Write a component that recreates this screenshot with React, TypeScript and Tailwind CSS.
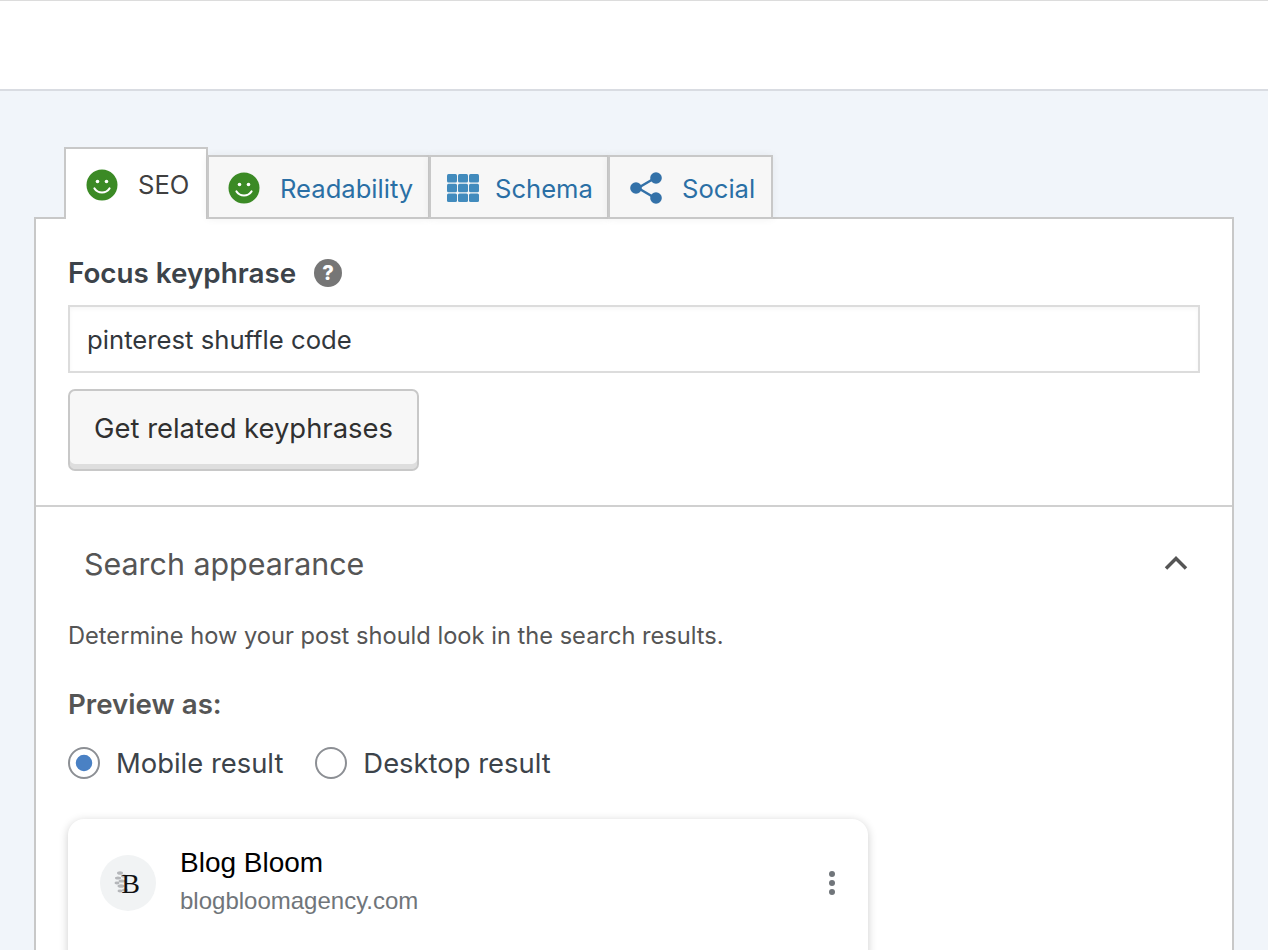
import { Circle } from "lucide-react";

const font = "font-['Inter','Liberation_Sans',sans-serif]";

function Smiley() {
  return (
    <svg viewBox="0 0 32 32" className="h-8 w-8 shrink-0">
      <circle cx="16" cy="16" r="15.5" fill="#3b8a25" />
      <circle cx="11.5" cy="12.5" r="1.8" fill="#fff" />
      <circle cx="20.5" cy="12.5" r="1.8" fill="#fff" />
      <path d="M8.5 19.5c2 3 4.500 4 7.500 4s5.500-1 7.500-4" fill="none" stroke="#fff" strokeWidth="2.200" strokeLinecap="round" />
    </svg>
  );
}

function GridIcon() {
  return (
    <svg viewBox="0 0 32 28" className="h-7 w-8 shrink-0" fill="#428bbd">
      {[0, 1, 2].map((r) =>
        [0, 1, 2].map((c) => <rect key={`${r}-${c}`} x={c * 11} y={r * 9.700} width="10" height="8.600" rx="1.500" />)
      )}
    </svg>
  );
}

function ShareIcon() {
  return (
    <svg viewBox="0 0 32 32" className="h-8 w-8 shrink-0">
      <path d="M8 16 25 6M8 16l17 10" stroke="#3371a8" strokeWidth="2.600" fill="none" />
      <circle cx="6" cy="16" r="5.800" fill="#3371a8" />
      <circle cx="26" cy="6" r="5.800" fill="#3371a8" />
      <circle cx="26" cy="26" r="5.800" fill="#3371a8" />
    </svg>
  );
}

function Tab({ icon, label, className }: { icon: React.ReactNode; label: string; className: string }) {
  return (
    <div className={`-ml-px flex h-[64px] items-center border-2 border-[#c8c8c8] bg-[#f7f7f7] pt-[1px] shadow-[0_0_8px_rgba(0,0,0,0.06)] ${className}`}>
      {icon}
      <span className="mt-[2px] text-[25.6px] leading-none text-[#2a6fa5]">{label}</span>
    </div>
  );
}

export default function App() {
  return (
    <div className={`${font} h-[950px] w-[1268px] overflow-hidden bg-[#f1f5fa]`}>
      <div className="h-[91px] border-b-2 border-t border-b-[#d9dce2] border-t-[#dcdcdc] bg-white" />

      <div className="ml-[34px] mr-[34px] pt-[56px]">
        {/* tabs */}
        <div className="relative z-10 -mb-[2px] flex items-end pl-[30px]">
          <div className="flex h-[72px] w-[144px] items-center gap-[20px] border-2 border-b-0 border-[#c8c8c8] bg-white pl-[20px] pt-[2px]">
            <Smiley />
            <span className="text-[25.6px] leading-none text-[#404040]">SEO</span>
          </div>
          <Tab icon={<Smiley />} label="Readability" className="w-[223px] gap-[20px] pl-[19px]" />
          <Tab icon={<GridIcon />} label="Schema" className="w-[180px] gap-[16px] pl-[16px]" />
          <Tab icon={<ShareIcon />} label="Social" className="w-[165px] gap-[20px] pl-[20px]" />
        </div>

        <div className="h-[800px] border-2 border-[#c8c8c8] bg-white">
          <div className="border-b-2 border-[#d0d0d0] px-[32px] pb-[34px] pt-[36px]">
            <div className="flex items-center gap-[18px]">
              <span className="text-[27.8px] font-semibold leading-[36px] text-[#3c434a]">Focus keyphrase</span>
              <span className="flex h-7 w-7 items-center justify-center rounded-full bg-[#767676] text-[20px] font-extrabold leading-none text-white">?</span>
            </div>
            <div className="mt-[14px] flex h-[68px] items-center border-2 border-[#dcdcdc] pl-[17px] pt-[2px] text-[25.7px] text-[#32373c] shadow-[inset_0_2px_4px_rgba(0,0,0,0.04)]">
              pinterest shuffle code
            </div>
            <button className="mt-[16px] block h-[82px] w-[351px] rounded-[7px] border-2 border-[#c8c8c8] bg-[#f7f7f7] pb-[3px] text-center text-[27.4px] text-[#303030] shadow-[inset_0_-5px_0_#dedede]">
              Get related keyphrases
            </button>
          </div>

          <div className="px-[32px]">
            <div className="flex items-center justify-between pl-[16px] pr-[12px] pt-[37px]">
              <span className="text-[30.4px] leading-[40px] text-[#555]">Search appearance</span>
              <svg viewBox="0 0 24 14" className="-mt-[2px] h-[14px] w-6" fill="none" stroke="#555" strokeWidth="3.500">
                <path d="M2 12.500 12 2.500l10 10" />
              </svg>
            </div>
            <p className="mt-[36px] text-[23.65px] leading-[32px] text-[#555]">
              Determine how your post should look in the search results.
            </p>
            <div className="mt-[34px] text-[27.7px] font-semibold leading-[36px] text-[#555]">Preview as:</div>
            <div className="mt-[25px] flex h-8 items-center text-[27.4px] leading-[32px] text-[#3c434a]">
              <span className="flex h-8 w-8 items-center justify-center rounded-full border-2 border-[#8c8f94]">
                <Circle className="h-[18px] w-[18px] fill-[#4a81c4] text-[#4a81c4]" />
              </span>
              <span className="ml-[16px]">Mobile result</span>
              <span className="ml-[32px] h-8 w-8 rounded-full border-2 border-[#8c8f94]" />
              <span className="ml-[16px]">Desktop result</span>
            </div>

            <div className="mt-[40px] flex h-[300px] w-[800px] items-start rounded-t-[16px] bg-white pl-[32px] pr-[33px] pt-[28px] shadow-[0_2px_10px_rgba(0,0,0,0.2)]">
              <div className="relative mt-[8px] flex h-14 w-14 items-center justify-center rounded-full bg-[#f1f3f4]">
                <svg viewBox="0 0 14 24" className="absolute left-[14px] top-[15px] h-6 w-3.5" fill="#b4b6b9">
                  <ellipse cx="6" cy="3" rx="3" ry="1.800" />
                  <ellipse cx="10" cy="6" rx="3" ry="1.500" />
                  <ellipse cx="4" cy="8" rx="3" ry="1.500" />
                  <ellipse cx="8" cy="11" rx="3.500" ry="1.600" />
                  <ellipse cx="3" cy="13" rx="2.500" ry="1.400" />
                  <ellipse cx="7" cy="16" rx="3.500" ry="1.800" />
                  <ellipse cx="11" cy="20" rx="3" ry="1.600" />
                  <ellipse cx="6" cy="21" rx="2.500" ry="1.400" />
                </svg>
                <span className="relative ml-[5px] mt-[2px] font-['Liberation_Serif',serif] text-[28px] leading-none text-[#111]">B</span>
              </div>
              <div className="ml-[24px]">
                <div className="font-['Liberation_Sans',sans-serif] text-[28px] leading-[32px] text-black">Blog Bloom</div>
                <div className="mt-[8px] font-['Liberation_Sans',sans-serif] text-[24px] leading-[28px] text-[#70757a]">blogbloomagency.com</div>
              </div>
              <div className="ml-auto mt-[24px] flex flex-col gap-[3px]">
                <span className="h-[6px] w-[6px] rounded-full bg-[#70757a]" />
                <span className="h-[6px] w-[6px] rounded-full bg-[#70757a]" />
                <span className="h-[6px] w-[6px] rounded-full bg-[#70757a]" />
              </div>
            </div>
          </div>
        </div>
      </div>
    </div>
  );
}
